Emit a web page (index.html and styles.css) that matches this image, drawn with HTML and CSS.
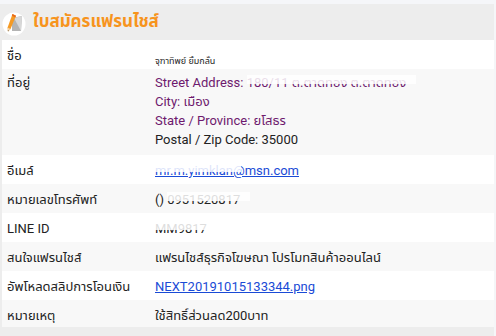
FILE: index.html
```html
<!DOCTYPE html>
<html lang="th">
<head>
<meta charset="utf-8">
<link rel="stylesheet" href="styles.css">
</head>
<body>
<div class="topstrip"></div>
<div class="panel">
  <div class="header">
    <svg class="icon" width="24" height="24" viewBox="0 0 24 24">
      <circle cx="12" cy="12" r="11.5" fill="#fff"/>
      <path d="M10 6 L20 4 L19 19 L10 19 Z" fill="#b4b4b4"/>
      <path d="M12 6 L20 4 L19 19 Z" fill="#d8d8d8"/>
      <path d="M10.5 2 L14 3.8 L8.5 17 L6 19.5 L5.6 15.6 Z" fill="#f59a23"/>
      <path d="M10.5 2 L14 3.8 L13.3 5.4 L9.8 3.6 Z" fill="#e8691a"/>
      <path d="M5.6 15.6 L8.5 17 L6 19.5 Z" fill="#f3d2a6"/>
      <path d="M5.8 18 L6.6 18.5 L6 19.5 Z" fill="#333"/>
    </svg>
    <span class="title">ใบสมัครแฟรนไชส์</span>
  </div>
  <div class="table">
    <div class="row odd">
      <div class="label">ชื่อ</div>
      <div class="value"><span class="tiny">จุฑาทิพย์ ยิ้มกลั่น</span></div>
    </div>
    <div class="row even addr">
      <div class="label">ที่อยู่</div>
      <div class="value">
        <div class="purple line">Street Address: <span class="masked">180/11 ต.ตาดทอง ต.ตาดทอง<span class="mask"></span></span></div>
        <div class="purple line">City: เมือง</div>
        <div class="purple line">State / Province: ยโสธร</div>
        <div class="line">Postal / Zip Code: 35000</div>
      </div>
    </div>
    <div class="row odd">
      <div class="label">อีเมล์</div>
      <div class="value"><a class="link masked" href="#">mr.m.yimklan@msn.com<span class="mask short"></span></a></div>
    </div>
    <div class="row even">
      <div class="label">หมายเลขโทรศัพท์</div>
      <div class="value">() <span class="masked">0951520817<span class="mask"></span></span></div>
    </div>
    <div class="row odd">
      <div class="label">LINE ID</div>
      <div class="value"><span class="masked">MM9817<span class="mask"></span></span></div>
    </div>
    <div class="row even">
      <div class="label">สนใจแฟรนไชส์</div>
      <div class="value">แฟรนไชส์ธุรกิจโฆษณา โปรโมทสินค้าออนไลน์</div>
    </div>
    <div class="row odd">
      <div class="label">อัพโหลดสลิปการโอนเงิน</div>
      <div class="value"><a class="link" href="#">NEXT20191015133344.png</a></div>
    </div>
    <div class="row even last">
      <div class="label">หมายเหตุ</div>
      <div class="value">ใช้สิทธิ์ส่วนลด200บาท</div>
    </div>
  </div>
</div>
</body>
</html>
```
FILE: styles.css
```css
html, body {
  margin: 0;
  padding: 0;
  background: #f5f6f8;
  width: 496px;
  height: 336px;
  overflow: hidden;
}
body {
  font-family: Roboto, "Noto Sans", "Noto Sans Thai", sans-serif;
  font-size: 13px;
  color: #222;
}
.topstrip {
  height: 4px;
  background: #f5f6f9;
}
.panel {
  width: 494px;
  height: 332px;
  background: #ededed;
}
.header {
  height: 36px;
  display: flex;
  align-items: center;
  padding-left: 2px;
  gap: 7px;
}
.icon {
  display: block;
  margin-top: 4px;
}
.title {
  color: #f7941d;
  font-weight: bold;
  font-size: 17px;
}
.table {
  margin-left: 2px;
  display: flex;
  flex-direction: column;
}
.row {
  display: flex;
  height: 29px;
  align-items: flex-start;
}
.row.odd { background: #ffffff; }
.row.even { background: #f8f8f8; }
.row.addr { height: 86px; }
.row.last { height: 27px; }
.label {
  width: 148px;
  flex: none;
  padding: 7px 0 0 5px;
  line-height: 17px;
}
.value {
  padding: 7px 0 0 0;
  line-height: 17px;
  flex: 1;
}
.row.addr .value {
  padding-top: 4px;
}
.row.addr .label {
  padding-top: 5px;
}
.line {
  line-height: 19px;
}
.purple { color: #6e1a6e; }
.link { color: #1a4bd6; text-decoration: underline; }
.tiny {
  font-size: 9px;
  position: relative;
  top: 4px;
}
.masked {
  position: relative;
}
.mask {
  position: absolute;
  left: 0;
  right: -10px;
  top: 0;
  height: 9px;
  background: rgba(255,255,255,0.85);
}
.mask.short {
  right: 40%;
  height: 9px;
}
```
